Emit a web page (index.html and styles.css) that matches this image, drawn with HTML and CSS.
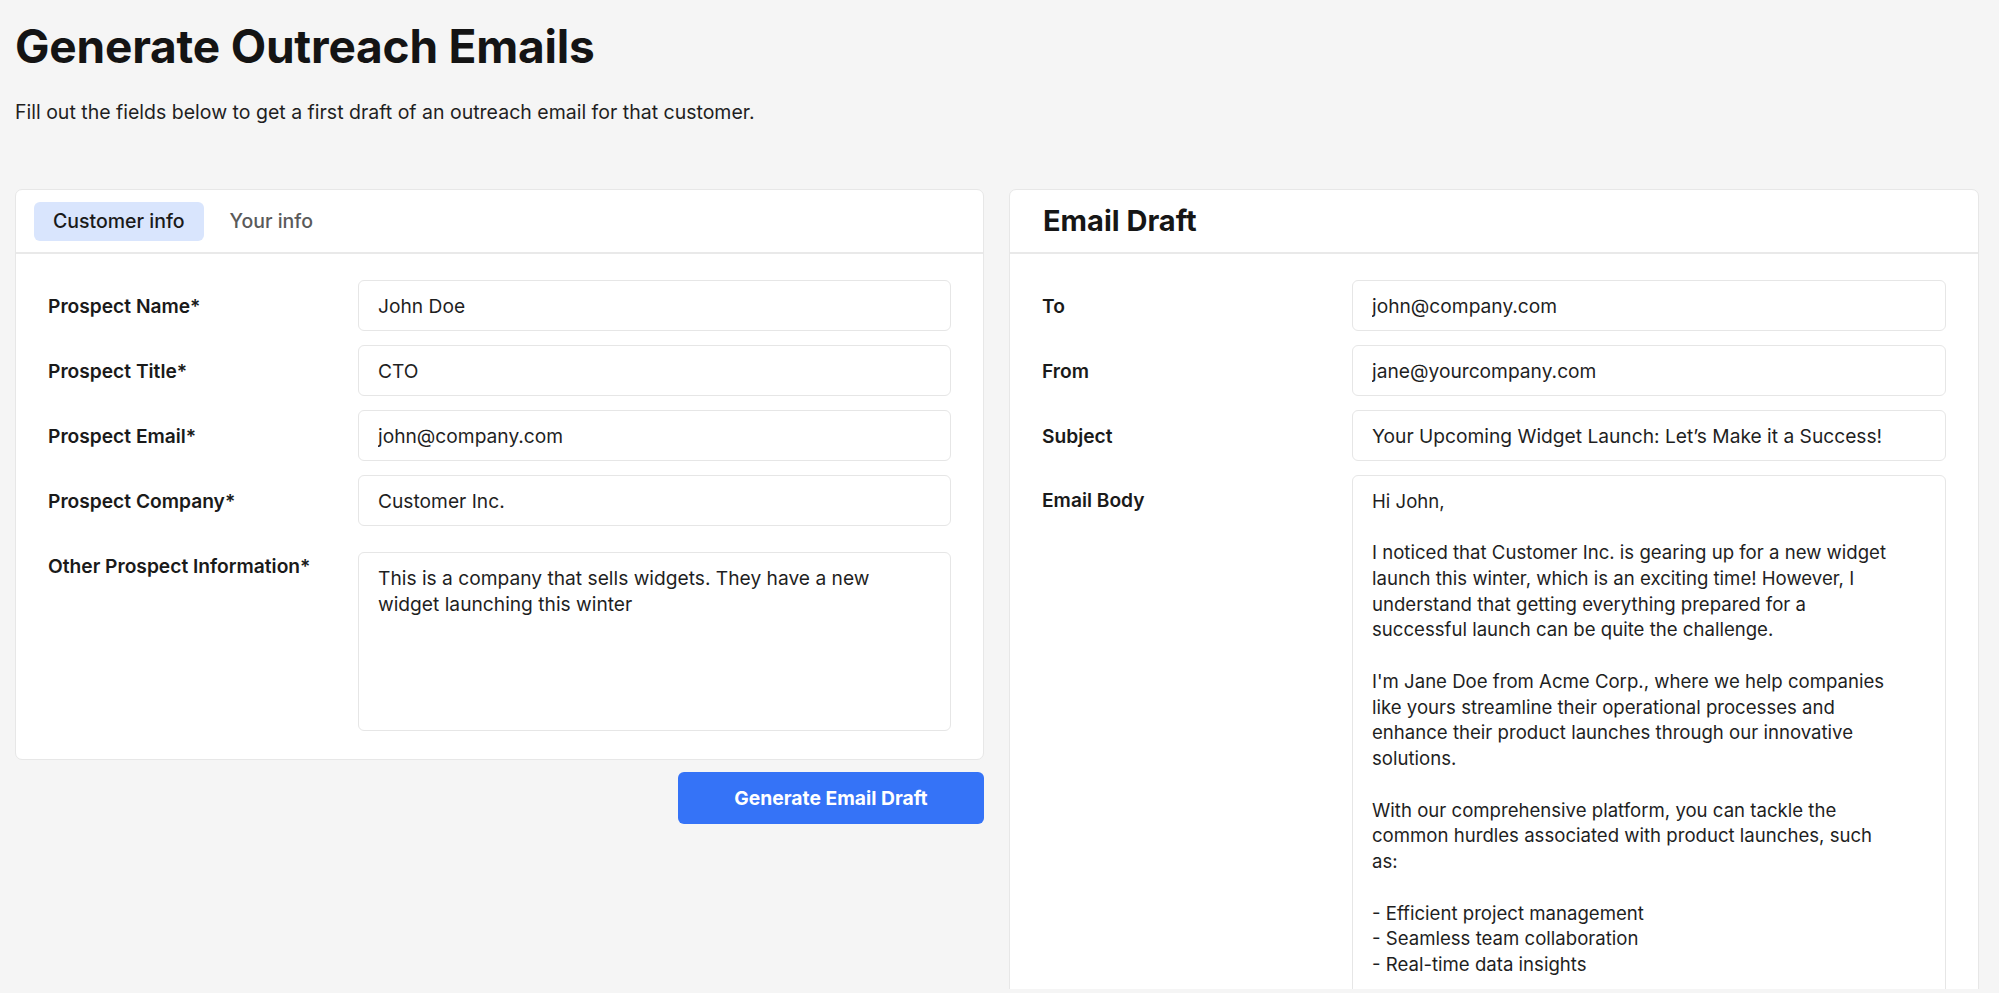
FILE: index.html
```html
<!DOCTYPE html>
<html lang="en">
<head>
<meta charset="utf-8">
<title>Generate Outreach Emails</title>
<link rel="stylesheet" href="styles.css">
</head>
<body>
<div class="page">
  <h1 class="title">Generate Outreach Emails</h1>
  <p class="subtitle">Fill out the fields below to get a first draft of an outreach email for that customer.</p>

  <div class="columns">
    <div class="left-col">
      <section class="card">
        <div class="card-head tabs">
          <button class="tab tab-active">Customer info</button>
          <button class="tab">Your info</button>
        </div>
        <div class="form form-left">
          <label class="label">Prospect Name*</label>
          <input class="field" type="text" value="John Doe">
          <label class="label">Prospect Title*</label>
          <input class="field" type="text" value="CTO">
          <label class="label">Prospect Email*</label>
          <input class="field" type="text" value="john@company.com">
          <label class="label">Prospect Company*</label>
          <input class="field" type="text" value="Customer Inc.">
          <label class="label label-top label-gap">Other Prospect Information*</label>
          <textarea class="field area area-gap">This is a company that sells widgets. They have a new
widget launching this winter</textarea>
        </div>
      </section>
      <div class="actions">
        <button class="primary">Generate Email Draft</button>
      </div>
    </div>

    <section class="card">
      <div class="card-head">
        <h2 class="card-title">Email Draft</h2>
      </div>
      <div class="form">
        <label class="label">To</label>
        <input class="field" type="text" value="john@company.com">
        <label class="label">From</label>
        <input class="field" type="text" value="jane@yourcompany.com">
        <label class="label">Subject</label>
        <input class="field" type="text" value="Your Upcoming Widget Launch: Let’s Make it a Success!">
        <label class="label label-top">Email Body</label>
        <textarea class="field area body-area">Hi John,

I noticed that Customer Inc. is gearing up for a new widget
launch this winter, which is an exciting time! However, I
understand that getting everything prepared for a
successful launch can be quite the challenge.

I'm Jane Doe from Acme Corp., where we help companies
like yours streamline their operational processes and
enhance their product launches through our innovative
solutions.

With our comprehensive platform, you can tackle the
common hurdles associated with product launches, such
as:

- Efficient project management
- Seamless team collaboration
- Real-time data insights

I'd love to set up a quick call to explore how we can
help make your widget launch a success.

Best regards,
Jane Doe
Acme Corp.</textarea>
      </div>
    </section>
  </div>
</div>
</body>
</html>
```

FILE: styles.css
```css
* {
  box-sizing: border-box;
}

html,
body {
  margin: 0;
  padding: 0;
  background: #f5f5f5;
}

body {
  font-family: Inter, "Noto Sans", "Liberation Sans", sans-serif;
  color: #1c1c1c;
  overflow: hidden;
}

.page {
  height: 989px;
  overflow: hidden;
  padding: 18px 20px 0 15px;
}

.title {
  margin: 0;
  font-size: 46px;
  line-height: 56px;
  font-weight: 700;
  color: #141414;
  letter-spacing: -0.2px;
}

.subtitle {
  margin: 25px 0 0;
  font-size: 19.5px;
  line-height: 26px;
  color: #1f1f1f;
}

.columns {
  margin-top: 64px;
  display: grid;
  grid-template-columns: 969px 970px;
  column-gap: 25px;
  align-items: start;
}

.card {
  background: #ffffff;
  border: 1px solid #e7e7e7;
  border-radius: 7px;
}

.card-head {
  height: 64px;
  border-bottom: 2px solid #e9e9e9;
  display: flex;
  align-items: center;
  padding: 0 18px;
}

.tabs {
  gap: 7px;
}

.tab {
  font-family: inherit;
  font-size: 19.5px;
  font-weight: 500;
  line-height: 26px;
  color: #5a5a5a;
  background: transparent;
  border: 0;
  border-radius: 6px;
  height: 39px;
  padding: 0 19px;
  cursor: pointer;
}

.tab-active {
  background: #d9e5fd;
  color: #1a1a1a;
}

.card-title {
  margin: 0;
  padding-left: 15px;
  font-size: 29px;
  line-height: 34px;
  font-weight: 700;
  color: #161616;
}

.form {
  display: grid;
  grid-template-columns: 310px 1fr;
  row-gap: 14px;
  align-items: center;
  padding: 26px 32px 27px;
}

.form-left {
  padding-bottom: 28px;
}

.label {
  font-size: 19.2px;
  line-height: 26px;
  font-weight: 600;
  color: #1a1a1a;
}

.label-top {
  align-self: start;
  margin-top: 12px;
}

.label-gap {
  margin-top: 13px;
}

.field {
  display: block;
  width: 100%;
  font-family: inherit;
  font-size: 19.2px;
  line-height: 26px;
  color: #1f1f1f;
  background: #ffffff;
  border: 1px solid #e6e6e6;
  border-radius: 6px;
  padding: 11.5px 19px;
  outline: none;
}

.area {
  resize: none;
  overflow: hidden;
  height: 179px;
  padding-right: 8px;
}

.area-gap {
  margin-top: 12px;
}

.body-area {
  height: 640px;
  font-size: 18.6px;
  line-height: 25.75px;
  padding-top: 12.5px;
}

.actions {
  display: flex;
  justify-content: flex-end;
  margin-top: 12px;
}

.primary {
  width: 306px;
  height: 52px;
  border: 0;
  border-radius: 6px;
  background: #3573f7;
  color: #ffffff;
  font-family: inherit;
  font-size: 19.3px;
  font-weight: 700;
  cursor: pointer;
}
```
